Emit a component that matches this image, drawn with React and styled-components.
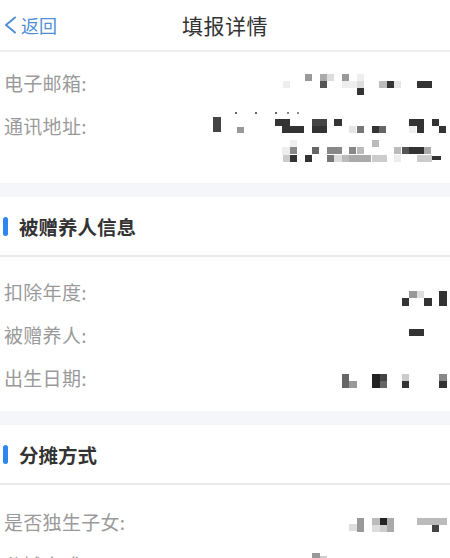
import React from 'react'
import styled, { createGlobalStyle } from 'styled-components'

const GlobalStyle = createGlobalStyle`
  body {
    margin: 0;
    background: #fff;
    font-family: "Noto Sans CJK SC", "Noto Sans", sans-serif;
  }
`

const Page = styled.div`
  width: 450px;
  height: 558px;
  overflow: hidden;
  background: #fff;
`

const Header = styled.header`
  position: relative;
  height: 50px;
  display: flex;
  align-items: center;
  justify-content: center;
  border-bottom: 2px solid #eeeeee;
`

const Back = styled.div`
  position: absolute;
  left: 3px;
  top: 0;
  height: 50px;
  display: flex;
  align-items: center;
  gap: 4px;
  color: #4f8fd6;
  font-size: 18px;
`

const Title = styled.h1`
  margin: 0;
  font-size: 21px;
  font-weight: 400;
  color: #333;
  letter-spacing: 0.5px;
`

const Card = styled.section`
  padding: ${({ $top }) => $top}px 3px ${({ $bottom }) => $bottom}px 4px;
`

const Band = styled.div`
  height: 14px;
  background: #f5f6fa;
`

const SectionHead = styled.div`
  height: 58px;
  display: flex;
  align-items: center;
  gap: 11px;
  padding-left: 3px;
  border-bottom: 2px solid #ebebeb;
  font-size: 19.5px;
  font-weight: 700;
  color: #333;
`

const Bar = styled.span`
  width: 5px;
  height: 19px;
  border-radius: 3px;
  background: #2f86ee;
`

const Row = styled.div`
  display: flex;
  align-items: flex-start;
  justify-content: space-between;
  height: ${({ $h }) => $h}px;
`

const Label = styled.span`
  line-height: 43px;
  font-size: 19px;
  color: #9a9a9a;
  letter-spacing: 0.3px;
`

const Value = styled.svg`
  display: block;
  flex-shrink: 0;
`

const Mosaic = ({ top, height, from, cells }) => (
  <Value
    width={447 - from}
    height={height}
    viewBox={`${from} ${top} ${447 - from} ${height}`}
  >
    {cells.map(([x, y, w, h, c], i) => (
      <rect key={i} x={x} y={y} width={w} height={h} fill={c} />
    ))}
  </Value>
)

const email = [
  [283, 81, 7, 7, '#eee'], [305, 74, 7, 7, '#999'], [320, 74, 7, 7, '#aaa'],
  [327, 74, 7, 7, '#ddd'], [320, 81, 7, 7, '#555'], [342, 74, 7, 7, '#999'],
  [342, 81, 7, 7, '#eee'], [349, 81, 8, 7, '#eee'], [357, 74, 7, 7, '#eee'],
  [357, 81, 7, 7, '#ddd'], [357, 88, 7, 7, '#333'], [379, 81, 8, 7, '#bbb'],
  [387, 81, 7, 7, '#333'], [394, 81, 7, 7, '#e5e5e5'], [417, 81, 15, 7, '#333'],
]

const address = [
  [213, 117, 8, 15, '#444'], [237, 127, 7, 6, '#999'],
  [235, 112, 2, 2, '#666'], [255, 112, 2, 2, '#666'], [275, 112, 2, 2, '#666'],
  [287, 112, 2, 2, '#888'], [297, 112, 2, 2, '#888'],
  [275, 119, 15, 7, '#333'], [282, 126, 22, 7, '#333'], [312, 119, 15, 7, '#444'],
  [312, 126, 15, 7, '#333'], [334, 119, 8, 7, '#333'], [349, 126, 7, 7, '#e5e5e5'],
  [357, 126, 7, 7, '#777'], [372, 126, 7, 7, '#333'], [379, 126, 7, 7, '#666'],
  [409, 119, 15, 7, '#333'], [409, 126, 7, 7, '#eee'], [417, 126, 7, 7, '#333'],
  [432, 119, 7, 7, '#333'], [439, 126, 7, 7, '#333'],
  [282, 147, 8, 8, '#eee'], [290, 140, 7, 7, '#eee'], [290, 147, 7, 7, '#888'],
  [283, 155, 7, 7, '#ccc'], [290, 155, 7, 7, '#333'], [305, 155, 7, 7, '#333'],
  [312, 147, 7, 7, '#666'], [327, 147, 15, 7, '#888'], [327, 155, 7, 7, '#777'],
  [334, 155, 8, 7, '#ddd'], [342, 155, 7, 7, '#bbb'], [349, 147, 7, 7, '#888'],
  [357, 147, 7, 7, '#bbb'], [349, 155, 22, 7, '#aaa'], [372, 140, 7, 7, '#bbb'],
  [372, 155, 15, 7, '#ccc'], [394, 147, 7, 7, '#bbb'], [394, 155, 7, 7, '#eee'],
  [402, 147, 7, 7, '#555'], [409, 147, 15, 7, '#333'], [424, 147, 7, 7, '#aaa'],
  [417, 155, 15, 7, '#ccc'], [432, 156, 9, 4, '#333'],
]

const year = [
  [402, 297, 7, 8, '#333'], [409, 290, 8, 7, '#999'], [417, 290, 7, 7, '#ddd'],
  [424, 297, 8, 8, '#333'], [439, 290, 8, 15, '#333'],
]

const person = [[409, 328, 15, 7, '#333']]

const birth = [
  [342, 373, 7, 14, '#666'], [349, 380, 8, 7, '#999'], [372, 373, 8, 14, '#222'],
  [380, 373, 7, 7, '#444'], [380, 380, 7, 7, '#666'], [402, 373, 7, 7, '#ccc'],
  [402, 380, 7, 7, '#333'], [439, 373, 8, 7, '#888'], [439, 380, 8, 7, '#333'],
]

const onlyChild = [
  [349, 523, 8, 7, '#ddd'], [357, 517, 7, 14, '#999'], [372, 517, 8, 7, '#bbb'],
  [380, 517, 7, 7, '#222'], [380, 524, 7, 7, '#ccc'], [387, 517, 7, 14, '#aaa'],
  [372, 524, 8, 7, '#ddd'], [417, 517, 30, 7, '#bbb'], [432, 524, 7, 7, '#444'],
]

const split = [[312, 552, 8, 6, '#999'], [320, 555, 7, 3, '#ccc']]

const App = () => (
  <Page>
    <GlobalStyle />
    <Header>
      <Back>
        <svg width="14" height="20" viewBox="0 0 14 20">
          <path d="M12 2.5L3 10l9 7.5" fill="none" stroke="#4f8fd6" strokeWidth="2" strokeLinecap="round" strokeLinejoin="round" />
        </svg>
        返回
      </Back>
      <Title>填报详情</Title>
    </Header>

    <Card $top={9} $bottom={13}>
      <Row $h={43}>
        <Label>电子邮箱:</Label>
        <Mosaic top={61} height={43} from={270} cells={email} />
      </Row>
      <Row $h={66}>
        <Label>通讯地址:</Label>
        <Mosaic top={104} height={66} from={205} cells={address} />
      </Row>
    </Card>
    <Band />

    <SectionHead>
      <Bar />
      被赠养人信息
    </SectionHead>
    <Card $top={13} $bottom={12}>
      <Row $h={43}>
        <Label>扣除年度:</Label>
        <Mosaic top={269} height={43} from={390} cells={year} />
      </Row>
      <Row $h={43}>
        <Label>被赠养人:</Label>
        <Mosaic top={312} height={43} from={390} cells={person} />
      </Row>
      <Row $h={43}>
        <Label>出生日期:</Label>
        <Mosaic top={355} height={43} from={330} cells={birth} />
      </Row>
    </Card>
    <Band />

    <SectionHead>
      <Bar />
      分摊方式
    </SectionHead>
    <Card $top={15} $bottom={10}>
      <Row $h={43}>
        <Label>是否独生子女:</Label>
        <Mosaic top={499} height={43} from={330} cells={onlyChild} />
      </Row>
      <Row $h={43}>
        <Label>分摊方式:</Label>
        <Mosaic top={542} height={43} from={300} cells={split} />
      </Row>
    </Card>
  </Page>
)

export default App
